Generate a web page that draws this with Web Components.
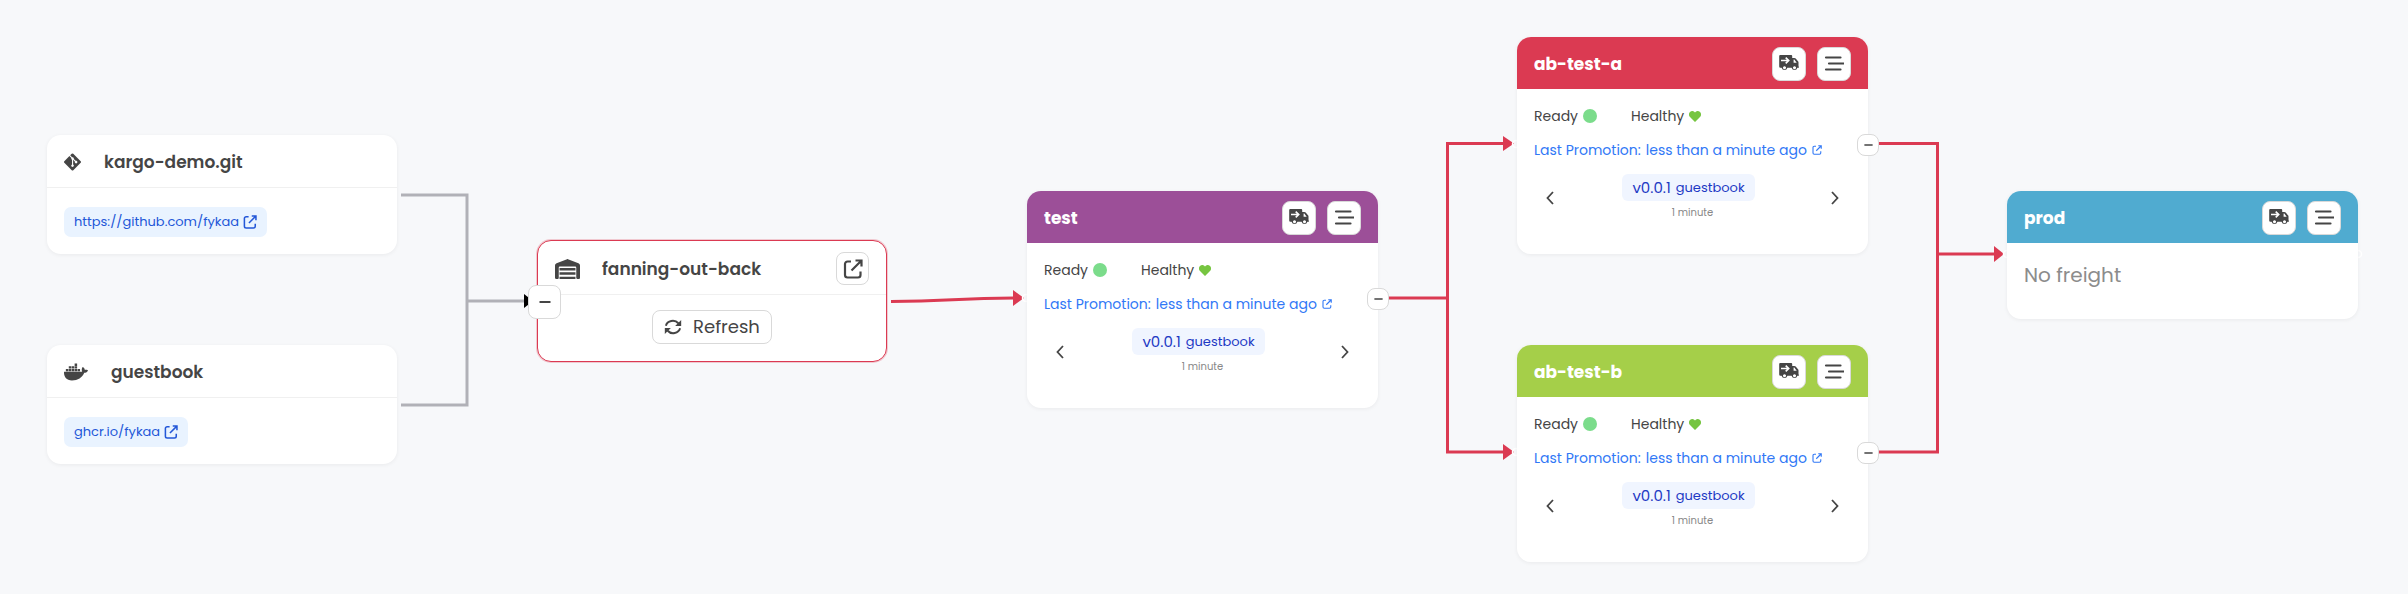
<!DOCTYPE html>
<html lang="en">
<head>
<meta charset="utf-8">
<title>Pipeline</title>
<style>
  body { margin: 0; background: #f7f8fa; color: #454545; font-family: Poppins, Inter, "Open Sans", sans-serif; }
</style>
</head>
<body>

<pipeline-graph>
  <repo-node style="--x:47px;--y:135px" icon="git" name="kargo-demo.git" href="https://github.com/fykaa" label="https://github.com/fykaa"></repo-node>
  <repo-node style="--x:47px;--y:345px" icon="docker" name="guestbook" href="https://ghcr.io/fykaa" label="ghcr.io/fykaa"></repo-node>
  <warehouse-node style="--x:537px;--y:240px" name="fanning-out-back"></warehouse-node>
  <stage-node style="--x:1027px;--y:191px;--stage:#9c4f98" name="test" collapsible><stage-status></stage-status></stage-node>
  <stage-node style="--x:1517px;--y:37px;--stage:#db3a52" name="ab-test-a" collapsible><stage-status></stage-status></stage-node>
  <stage-node style="--x:1517px;--y:345px;--stage:#a5cf49" name="ab-test-b" collapsible><stage-status></stage-status></stage-node>
  <stage-node style="--x:2007px;--y:191px;--stage:#50abd0" name="prod"><no-freight>No freight</no-freight></stage-node>
</pipeline-graph>

<script>
const ICONS = {
  git: ['0 32 448 448', '<path d="M439.55 236.05L244 40.45a28.87 28.87 0 0 0-40.81 0l-40.66 40.63 51.52 51.52c27.06-9.14 52.68 16.77 43.39 43.68l49.66 49.66c34.23-11.8 61.18 31 35.47 56.69-26.49 26.49-70.21-2.87-56-37.34L240.22 199v121.85c25.3 12.54 22.26 41.85 9.08 55a34.34 34.34 0 0 1-48.55 0c-17.57-17.6-11.07-46.91 11.25-56v-123c-20.8-8.51-24.6-30.74-18.64-45L142.57 101 8.45 235.14a28.86 28.86 0 0 0 0 40.81l195.61 195.6a28.86 28.86 0 0 0 40.8 0l194.69-194.69a28.86 28.86 0 0 0 0-40.81z"/>'],
  docker: ['0 16 640 480', '<path d="M349.9 236.3h-66.1v-59.4h66.1v59.4zm0-204.3h-66.1v60.7h66.1V32zm78.2 144.8H362v59.4h66.1v-59.4zm-156.3-72.1h-66.1v60.1h66.1v-60.1zm78.1 0h-66.1v60.1h66.1v-60.1zm276.8 100c-14.4-9.7-47.6-13.2-73.1-8.4-3.3-24-16.7-44.9-41.1-63.7l-14-9.3-9.3 14c-18.4 27.8-23.4 73.6-3.7 103.8-8.7 4.7-25.8 11.1-48.4 10.7H2.4c-8.7 50.8 5.8 116.8 44 162.1 37.1 43.9 92.7 66.2 165.4 66.2 157.4 0 273.9-72.5 328.4-204.2 21.4.4 67.6.1 91.3-45.2 1.5-2.5 6.6-13.2 8.5-17.1l-13.3-8.9zm-511.1-27.9h-66v59.4h66.1v-59.4zm78.1 0h-66.1v59.4h66.1v-59.4zm78.1 0h-66.1v59.4h66.1v-59.4zm-78.1-72.1h-66.1v60.1h66.1v-60.1z"/>'],
  warehouse: ['0 0 640 512', '<path d="M0 488V171.3c0-26.2 15.9-49.7 40.2-59.4L308.1 4.8c7.6-3.1 16.1-3.1 23.8 0L599.8 111.9c24.3 9.7 40.2 33.3 40.2 59.4V488c0 13.3-10.7 24-24 24H568c-13.3 0-24-10.7-24-24V224c0-17.7-14.3-32-32-32H128c-17.7 0-32 14.3-32 32V488c0 13.3-10.7 24-24 24H24c-13.3 0-24-10.7-24-24zM116 452H524V512H116zM116 342H524V404H116zM116 232H524V294H116z"/>'],
  external: ['0 0 20 20', '<path d="M8 2.500H4.500a2.500 2.500 0 0 0-2.500 2.500V16a2.500 2.500 0 0 0 2.500 2.500H15a2.500 2.500 0 0 0 2.500-2.500V12.500M12.500 1.500H18.500V7.500M18 2L8.500 11.500" fill="none" stroke="currentColor" stroke-width="2.200"/>'],
  refresh: ['0 0 20 18', '<path d="M2 7.500A8 7.200 0 0 1 16 4.800M18 10.500A8 7.200 0 0 1 4 13.200" fill="none" stroke="currentColor" stroke-width="2.200"/><path d="M19.200 1V7.800H12.400zM.8 17V10.200H7.600z"/>'],
  truck: ['0 0 20 18', '<path fill-rule="evenodd" d="M1.200 0H12.200a1 1 0 0 1 1 1V3H15.300a2 2 0 0 1 1.400.6L19 6.200a2 2 0 0 1 .5 1.300V11.200a1.200 1.200 0 0 1 .3 1.500H18.400A3 3 0 0 1 12.600 12.700H8.400A3 3 0 0 1 2.600 12.700H1.400A1.200 1.200 0 0 1 .2 11.500V1A1 1 0 0 1 1.200 0zM14.600 4.600V7.700H17.700L15.300 4.600zM5.500 11.300a1.500 1.500 0 1 0 .01 0zM15.500 11.300a1.500 1.500 0 1 0 .01 0z"/><path d="M2 5.500H9.500M6.700 2.600L9.700 5.500L6.700 8.400" fill="none" stroke="#fff" stroke-width="1.600"/>'],
  menu: ['0 0 20 18', '<path d="M2 2.500H16.500M5 8.500H19.500M2 14.500H16.500" fill="none" stroke="currentColor" stroke-width="2.200" stroke-linecap="round"/>'],
  minus: ['0 0 12 12', '<path d="M.5 6H11.500" fill="none" stroke="currentColor" stroke-width="2"/>'],
  left: ['0 0 8 14', '<path d="M7 1L1.500 7L7 13" fill="none" stroke="currentColor" stroke-width="1.800"/>'],
  right: ['0 0 8 14', '<path d="M1 1L6.500 7L1 13" fill="none" stroke="currentColor" stroke-width="1.800"/>'],
  heart: ['0 0 12 11', '<path d="M6 11L1 6A3.300 3.300 0 0 1 1 1.100A3.200 3.200 0 0 1 6 1.500A3.200 3.200 0 0 1 11 1.100A3.300 3.300 0 0 1 11 6z"/>']
};

const BASE = `<style>
  *, *::before { box-sizing: border-box; }
  button { font: inherit; color: inherit; padding: 0; display: flex; align-items: center; justify-content: center; cursor: pointer;
    background: #fff; border: 1px solid #d9d9d9; border-radius: 8px; }
  a { text-decoration: none; display: inline-flex; align-items: center; }
  .card { background: #fff; border-radius: 14px; box-shadow: 0 1px 4px #0000000f; }
  h2 { margin: 0; font-size: 17px; line-height: 26px; font-weight: 600; }
</style>`;
const NODE = `<style>:host { display: block; position: absolute; left: var(--x); top: var(--y); width: 350px; }</style>`;

function define(name, render) {
  customElements.define(name, class extends HTMLElement {
    connectedCallback() {
      if (this.shadowRoot) return;
      this.attachShadow({ mode: 'open' }).innerHTML = BASE + render(this);
    }
  });
}

define('ui-icon', el => {
  const [box, shape] = ICONS[el.getAttribute('name')];
  return `<style>
    :host { display: inline-flex; flex: none; }
    svg { display: block; width: 100%; height: 100%; fill: currentColor; }
  </style><svg viewBox="${box}" aria-hidden="true">${shape}</svg>`;
});

define('pipeline-graph', () => `<style>
    :host { display: block; position: relative; min-height: 100vh; overflow: auto; }
    svg { position: absolute; left: 0; top: 0; width: 2408px; height: 594px; max-width: none; fill: none; stroke-width: 3; z-index: -1; }
    .grey { stroke: #b1b1b7; }
    .red { stroke: #db3a52; }
    .dot { stroke: #fff; stroke-width: 1.500; }
    .tip { stroke: none; fill: #db3a52; }
  </style>
  <slot></slot>
  <svg aria-hidden="true">
    <g class="grey"><path d="M401 195H467V301H524M401 405H467V301"/></g>
    <path d="M524 294L533 301L524 308z" fill="#000"/>
    <g class="red">
      <path d="M891 301.500C950 301.500 955 298 1014 298"/>
      <path d="M1380 298H1447.500M1504 143.500H1447.500V452H1504"/>
      <path d="M1870 143.500H1937.500V452H1870M1937.500 254H1995"/>
    </g>
    <g class="tip">
      <path d="M1013 290V306L1024 298z"/><path d="M1503 136V151L1514 143.500z"/>
      <path d="M1503 444V460L1514 452z"/><path d="M1994 246V262L2004 254z"/>
    </g>
    <g class="dot"><circle cx="1026" cy="298" r="3.500"/><circle cx="1516" cy="144" r="3.500"/><circle cx="1516" cy="452" r="3.500"/><circle cx="2007" cy="254" r="3.500"/><circle cx="2358" cy="254" r="3.500"/></g>
  </svg>`);

define('repo-node', el => NODE + `<style>
    header { display: flex; align-items: center; gap: 23px; height: 53px; padding: 2px 17px 0; border-bottom: 1px solid #f0f0f0; }
    header ui-icon { width: ${el.getAttribute('icon') === 'git' ? 17 : 24}px; height: 18px; }
    .body { padding: 19px 17px 17px; display: flex; }
    a { gap: 4px; height: 30px; padding: 0 10px; border-radius: 7px; background: #e9f3ff; color: #2357d8; font-size: 13px; line-height: 20px; }
    a ui-icon { width: 14px; height: 14px; }
  </style>
  <article class="card">
    <header><ui-icon name="${el.getAttribute('icon')}"></ui-icon><h2>${el.getAttribute('name')}</h2></header>
    <div class="body"><a href="${el.getAttribute('href')}">${el.getAttribute('label')}<ui-icon name="external"></ui-icon></a></div>
  </article>`);

define('warehouse-node', el => NODE + `<style>
    .card { border: 1px solid #db3a52; box-shadow: 0 0 0 1px #db3a5240; }
    header { display: flex; align-items: center; height: 54px; padding: 2px 17px 0; border-bottom: 1px solid #f0f0f0; }
    header > ui-icon { width: 25px; height: 20px; margin-right: 22px; }
    h2 { flex: 1; }
    .open { width: 33px; height: 33px; }
    .open ui-icon { width: 20px; height: 20px; }
    .body { display: flex; justify-content: center; padding: 15px 17px 17px; }
    .refresh { gap: 11px; height: 34px; padding: 0 11px; font-size: 18px; line-height: 24px; }
    .refresh ui-icon { width: 18px; height: 16px; }
    .fold { position: absolute; left: -9px; top: 45px; width: 33px; height: 34px; }
    .fold ui-icon { width: 12px; height: 12px; }
  </style>
  <article class="card">
    <header><ui-icon name="warehouse"></ui-icon><h2>${el.getAttribute('name')}</h2>
      <button class="open" aria-label="Open"><ui-icon name="external"></ui-icon></button></header>
    <div class="body"><button class="refresh"><ui-icon name="refresh"></ui-icon>Refresh</button></div>
  </article>
  <button class="fold" aria-label="Collapse"><ui-icon name="minus"></ui-icon></button>`);

define('stage-node', el => NODE + `<style>
    :host { width: 351px; }
    header { display: flex; align-items: center; gap: 11px; height: 52px; padding: 2px 17px 0; border-radius: 14px 14px 0 0; background: var(--stage); color: #fff; }
    h2 { flex: 1; font-weight: 700; }
    header button { width: 34px; height: 34px; color: #454545; }
    header ui-icon { width: 20px; height: 18px; }
    .fold { position: absolute; right: -11px; top: 97px; width: 22px; height: 22px; }
    .fold ui-icon { width: 9px; height: 12px; }
  </style>
  <article class="card">
    <header><h2>${el.getAttribute('name')}</h2>
      <button aria-label="Promote"><ui-icon name="truck"></ui-icon></button>
      <button aria-label="Menu"><ui-icon name="menu"></ui-icon></button></header>
    <slot></slot>
  </article>
  ${el.hasAttribute('collapsible') ? '<button class="fold" aria-label="Collapse"><ui-icon name="minus"></ui-icon></button>' : ''}`);

define('stage-status', () => `<style>
    :host { display: block; padding: 17px 17px 33px; font-size: 14px; line-height: 20px; }
    .state { display: flex; gap: 34px; margin-bottom: 14px; }
    .state span { display: flex; align-items: center; gap: 5px; }
    .dot { width: 14px; height: 14px; border-radius: 50%; background: #7bdc8b; }
    .state ui-icon { width: 12px; height: 11px; color: #76c540; }
    .last { gap: 5px; color: #3178f6; margin-bottom: 14px; vertical-align: top; }
    .last ui-icon { width: 10px; height: 10px; }
    .freight { display: flex; align-items: center; }
    .freight button { border: 0; width: 32px; height: 32px; }
    .freight button ui-icon { width: 8px; height: 14px; }
    .pick { flex: 1; display: flex; flex-direction: column; align-items: center; gap: 4px; }
    .tag { display: flex; align-items: center; gap: 5px; height: 27px; padding: 0 10px; margin-right: 8px; border-radius: 6px; background: #f0f5ff; color: #1d39c4; font-size: 15px; }
    .tag small { font-size: 13px; }
    .age { font-size: 10px; line-height: 16px; color: #888; }
  </style>
  <div class="state"><span>Ready <i class="dot"></i></span><span>Healthy <ui-icon name="heart"></ui-icon></span></div>
  <a class="last" href="#promotion"><span>Last Promotion:</span><span>less than a minute ago</span><ui-icon name="external"></ui-icon></a>
  <div class="freight">
    <button aria-label="Previous"><ui-icon name="left"></ui-icon></button>
    <div class="pick"><div class="tag"><span>v0.0.1</span><small>guestbook</small></div><div class="age">1 minute</div></div>
    <button aria-label="Next"><ui-icon name="right"></ui-icon></button>
  </div>`);

define('no-freight', () => `<style>
    :host { display: block; padding: 20px 17px 32px; font-size: 20px; line-height: 24px; color: #8c8c8c; }
  </style><slot></slot>`);
</script>
</body>
</html>
